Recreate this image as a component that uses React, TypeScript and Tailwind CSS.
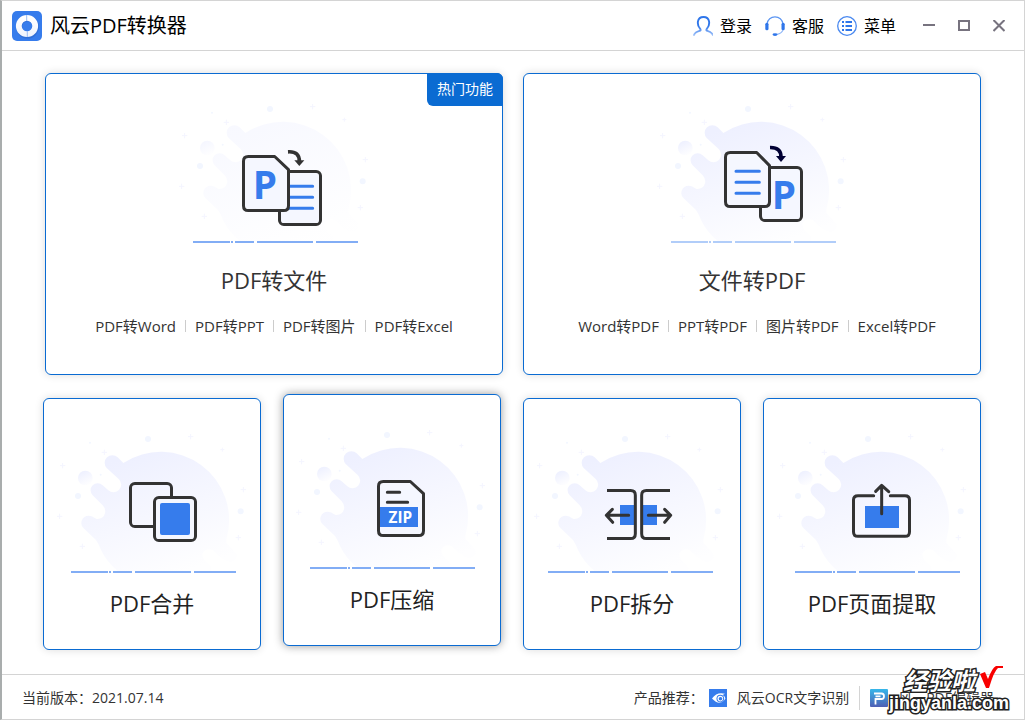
import type { ReactNode } from 'react';

const INK = '#333333';
const BLUE = '#367cec';
const PAPER = '#f5f7ff';

type SceneProps = {
  id: string;
  shift?: number;
  lineShift?: number;
  blobOpacity?: number;
  lineColor?: string;
  children: ReactNode;
};

/* Splash backdrop with a dashed ground line; the icon is drawn on top. */
function Scene({ id, shift = 0, lineShift = 0, blobOpacity = 1, lineColor = '#82adf5', children }: SceneProps) {
  return (
    <svg viewBox="60 135 576 438" width="192" height="146" className="shrink-0 overflow-visible" aria-hidden="true">
      <defs>
        <linearGradient id={`${id}-blob`} gradientUnits="userSpaceOnUse" x1="260" y1="220" x2="390" y2="580">
          <stop offset="0" stopColor="#eef0ff" />
          <stop offset="1" stopColor="#fefeff" />
        </linearGradient>
        <linearGradient id={`${id}-drop`} x1="0" y1="0" x2="0.5" y2="1">
          <stop offset="0" stopColor="#ebeeff" />
          <stop offset="1" stopColor="#fdfdff" />
        </linearGradient>
      </defs>
      <g transform={`translate(${shift} 0)`}>
        <path
          opacity={blobOpacity}
          fill={`url(#${id}-blob)`}
          d="M262 234 L245 217 A23 23 0 0 0 212 249 L248 282 A23 23 0 0 1 217 316 L200 301 A21 21 0 0 0 170 331 L200 361 Q210 372 207 385 Q202 403 182 402 Q167 392 158 392 A22 22 0 0 0 143 430 L180 465 Q190 480 195 495 Q213 532 245 558 L525 558 Q530 548 520 540 Q495 520 500 505 Q510 487 530 495 Q565 532 585 531 Q608 524 600 505 L572 475 Q570 468 572 460 A205 205 0 0 0 262 234 Z"
        />
        <circle cx="148" cy="279" r="22" fill={`url(#${id}-drop)`} opacity={blobOpacity < 1 ? 0.6 : 1} />
        <g fill="#f2f6ff">
          <circle cx="126" cy="333" r="9" />
          <circle cx="336" cy="162" r="9" />
          <circle cx="614" cy="379" r="9" />
          <circle cx="162" cy="173" r="3" />
          <circle cx="194" cy="269" r="3" />
        </g>
        <path
          stroke="#f4f5ff"
          strokeWidth="3"
          fill="none"
          d="M197 202h16m-8-8v16M72 242h16m-8-8v16M63 394h16m-8-8v16M131 484h16m-8-8v16M456 155h16m-8-8v16M553 194h12m-6-6v12M614 314h16m-8-8v16M599 458h16m-8-8v16"
        />
        <path
          transform={`translate(${lineShift} 0)`}
          stroke={lineColor}
          strokeWidth="6"
          fill="none"
          d="M105 561H216M219 561H225M231 561H288M297 561H465M474 561H600"
        />
      </g>
      {children}
    </svg>
  );
}

function PdfToFileArt() {
  return (
    <Scene id="to-file" blobOpacity={0.42}>
      <g transform="translate(36 33)" fill="none" stroke={INK} strokeWidth="9">
        <rect x="328.5" y="316.5" width="123" height="159" rx="13" fill={PAPER} />
        <path d="M350 361H428M350 394H428M350 427H428" stroke={BLUE} strokeLinecap="round" />
        <path fill={PAPER} strokeLinejoin="round" d="M314 271.5H235Q220.5 271.5 220.5 286V419Q220.5 433.5 235 433.5H341Q355.5 433.5 355.5 419V311Z" />
        <path d="M354 257.500C378 256 388 266 388 286" strokeWidth="11" />
        <path d="M373 283H403L388 300Z" fill={INK} stroke="none" />
        <text x="248" y="400" fill={BLUE} stroke="none" fontSize="116" className="font-['Open_Sans',sans-serif] font-bold">P</text>
      </g>
    </Scene>
  );
}

function FileToPdfArt() {
  return (
    <Scene id="to-pdf" lineColor="#b1cdf9">
      <g transform="translate(42 33)" fill="none" stroke={INK} strokeWidth="9">
        <rect x="331.5" y="304.5" width="123" height="159" rx="13" fill={PAPER} />
        <path fill={PAPER} strokeLinejoin="round" d="M320 259.500H241Q226.500 259.500 226.500 274V407Q226.500 421.500 241 421.500H344Q358.500 421.500 358.500 407V299Z" />
        <path d="M258 316H328M258 349H328M258 382H328" stroke={BLUE} strokeLinecap="round" />
        <path d="M360 244.500C383 244 393 254 393 273" stroke="#000033" strokeWidth="11" />
        <path d="M378 270H408L393 288Z" fill="#000033" stroke="none" />
        <text x="365" y="430" fill={BLUE} stroke="none" fontSize="116" className="font-['Open_Sans',sans-serif] font-bold">P</text>
      </g>
    </Scene>
  );
}

function MergeArt() {
  return (
    <Scene id="merge">
      <g fill="none" stroke={INK} strokeWidth="9">
        <rect x="283.5" y="295.5" width="123" height="129" rx="13" />
        <rect x="355.5" y="337.5" width="123" height="129" rx="13" fill={PAPER} />
        <rect x="372" y="354" width="90" height="96" rx="6" fill={BLUE} stroke="none" />
      </g>
    </Scene>
  );
}

function ZipArt() {
  return (
    <Scene id="zip" shift={-3}>
      <g transform="translate(0 12)" fill="none" stroke={INK} strokeWidth="9">
        <path fill={PAPER} strokeLinejoin="round" d="M403 289.500H322Q307.500 289.500 307.500 304V437Q307.500 451.500 322 451.500H428Q442.500 451.500 442.500 437V326Z" />
        <path strokeLinecap="round" d="M334 322H371M334 352H395" />
        <rect x="312" y="366" width="114" height="60" fill={BLUE} stroke="none" />
        <text x="373" y="414" textAnchor="middle" fill="#ffffff" stroke="none" fontSize="46" className="font-['Open_Sans',sans-serif] font-bold">ZIP</text>
      </g>
    </Scene>
  );
}

function SplitArt() {
  return (
    <Scene id="split" shift={-9}>
      <path fill={BLUE} d="M312 360h42v60h-42zM381 360h42v60h-42z" />
      <g fill="none" stroke={INK} strokeWidth="9">
        <path d="M273 316.5H344Q358 316.5 358 331V446Q358 460.5 344 460.5H273M462 316.5H391Q377 316.5 377 331V446Q377 460.5 391 460.5H462" />
        <path strokeLinecap="round" strokeLinejoin="round" d="M338 391H271M289 373L271 391L290 412M397 391H464M446 373L464 391L446 412" />
      </g>
    </Scene>
  );
}

function ExtractArt() {
  return (
    <Scene id="extract" lineShift={12}>
      <rect x="327" y="363" width="102" height="66" fill={BLUE} />
      <g fill="none" stroke={INK} strokeWidth="9" strokeLinecap="round" strokeLinejoin="round">
        <path d="M353 332H306Q292.500 332 292.500 345V440Q292.500 454 306 454H447Q460.500 454 460.500 440V345Q460.500 332 447 332H403" />
        <path d="M377 386V302M359 319L377 301L398 320" />
      </g>
    </Scene>
  );
}

function Logo() {
  return (
    <svg viewBox="0 0 30 30" width="30" height="30" aria-hidden="true">
      <defs>
        <linearGradient id="logo-ring" x1="0" y1="0" x2="0" y2="1">
          <stop offset="0" stopColor="#ffffff" />
          <stop offset="1" stopColor="#f1f5fd" />
        </linearGradient>
      </defs>
      <rect width="30" height="30" rx="5" fill={BLUE} />
      <circle cx="15.500" cy="16" r="8.500" fill="none" stroke="#2a62c4" strokeWidth="6" opacity="0.5" />
      <circle cx="15" cy="15" r="8.200" fill="none" stroke="url(#logo-ring)" strokeWidth="5.800" />
      <path d="M14.700 4V10M15.300 20V26" stroke="#8fb5f4" strokeWidth="0.900" />
    </svg>
  );
}

function UserIcon() {
  return (
    <svg viewBox="0 0 20 20" width="20" height="20" fill="none" strokeLinecap="round" aria-hidden="true">
      <defs>
        <linearGradient id="user-fade" gradientUnits="userSpaceOnUse" x1="0" y1="0" x2="0" y2="20">
          <stop offset="0.500" stopColor="#2f76ea" />
          <stop offset="1" stopColor="#a9c8fa" />
        </linearGradient>
      </defs>
      <path
        stroke="url(#user-fade)"
        strokeWidth="1.900"
        d="M1 19Q2 16 7.300 14.600Q8 13.800 7 12.600C3.800 9 3.600 1 10.500 1S17.200 9 14 12.600Q13 13.800 13.700 14.600Q18.500 16 20 19"
      />
    </svg>
  );
}

function HeadsetIcon() {
  return (
    <svg viewBox="0 0 20 20" width="20" height="20" fill="none" aria-hidden="true">
      <path d="M2 8C2.500 3.500 6 0.800 10 0.800S17.500 3.500 18 8" stroke="#5b95f2" strokeWidth="1.200" />
      <rect x="0.300" y="6.800" width="3.200" height="7.400" rx="1.500" fill="#2f76ea" />
      <rect x="16.500" y="6.800" width="3.200" height="7.400" rx="1.500" fill="#2f76ea" />
      <path d="M18 14Q16.500 17.600 12 18.400" stroke="#8db5f7" strokeWidth="1.100" />
      <ellipse cx="10" cy="18.600" rx="2.500" ry="1.300" fill="#2f76ea" />
    </svg>
  );
}

function ListIcon() {
  return (
    <svg viewBox="0 0 20 20" width="20" height="20" fill="none" aria-hidden="true">
      <circle cx="10" cy="10" r="9.300" stroke="#4a89f0" strokeWidth="1.300" />
      <path d="M5 6H7M5 10H7M5 14H7M8.500 6H15M8.500 10H15M8.500 14H15" stroke="#2f76ea" strokeWidth="2" />
    </svg>
  );
}

function EyeIcon() {
  return (
    <svg viewBox="0 0 18 18" width="18" height="18" aria-hidden="true">
      <rect width="18" height="18" fill={BLUE} />
      <path d="M3 9.500Q8 2.500 16 4.800L13.500 6Q16.300 7.400 16.400 9.400Q11 18 3 9.500Z" fill="#ffffff" />
      <circle cx="11.300" cy="9.600" r="3.800" fill={BLUE} />
      <circle cx="11.300" cy="9.600" r="2.800" fill="#ffffff" />
      <circle cx="11.500" cy="9.800" r="1.800" fill={BLUE} />
    </svg>
  );
}

function EditorIcon() {
  return (
    <svg viewBox="0 0 18 18" width="18" height="18" aria-hidden="true">
      <defs>
        <linearGradient id="editor-bg" x1="0" y1="0" x2="0" y2="1">
          <stop offset="0" stopColor="#35b7ea" />
          <stop offset="1" stopColor="#4f5fb4" />
        </linearGradient>
      </defs>
      <rect width="18" height="18" rx="1" fill="url(#editor-bg)" />
      <path d="M4 4.500H11.500Q14 4.500 14 7.200T11.500 10H5.500V15.500M5.500 7.300H10.500" fill="none" stroke="#ffffff" strokeWidth="1.800" />
    </svg>
  );
}

function Watermark() {
  return (
    <div className="pointer-events-none absolute right-[15px] bottom-1.5 flex flex-col items-end font-bold text-white [paint-order:stroke_fill]">
      <div className="flex items-start gap-1 pr-1.5">
        <span className="text-2xl leading-6 italic [-webkit-text-stroke:3px_#222222]">经验啦</span>
        <svg viewBox="0 0 24 24" width="24" height="24" className="-mt-1" aria-hidden="true">
          <path d="M1 9L6 7L9 14Q13 3 17 1H24V3H19Q15 6 10 23H7Z" fill="#f80000" />
        </svg>
      </div>
      <span className="font-['Liberation_Sans',sans-serif] text-lg leading-5 [-webkit-text-stroke:3px_#222222]">jingyanla.com</span>
    </div>
  );
}

const account = [
  { label: '登录', icon: <UserIcon /> },
  { label: '客服', icon: <HeadsetIcon /> },
  { label: '菜单', icon: <ListIcon /> },
];

const converters = [
  {
    title: 'PDF转文件',
    art: <PdfToFileArt />,
    hot: true,
    links: ['PDF转Word', 'PDF转PPT', 'PDF转图片', 'PDF转Excel'],
    inset: '',
  },
  {
    title: '文件转PDF',
    art: <FileToPdfArt />,
    hot: false,
    links: ['Word转PDF', 'PPT转PDF', '图片转PDF', 'Excel转PDF'],
    inset: 'pl-2.5',
  },
];

const tools = [
  { title: 'PDF合并', art: <MergeArt />, raised: false },
  { title: 'PDF压缩', art: <ZipArt />, raised: true },
  { title: 'PDF拆分', art: <SplitArt />, raised: false },
  { title: 'PDF页面提取', art: <ExtractArt />, raised: false },
];

export default function App() {
  return (
    <div className="relative flex min-h-screen flex-col border-y border-r border-l-2 border-[#d4d4d4] border-l-[#a9adad] bg-white font-['Open_Sans','Noto_Sans_CJK_SC',sans-serif] text-[#333333]">
      <header className="flex h-[50px] items-center border-b border-[#d4d4d4] pr-[19px] pl-[10px] text-black">
        <Logo />
        <h1 className="ml-2 text-xl leading-7">风云PDF转换器</h1>
        <nav className="ml-auto flex items-center gap-[13px]">
          {account.map((item) => (
            <button key={item.label} type="button" className="flex items-center gap-[7px] text-base leading-6">
              {item.icon}
              {item.label}
            </button>
          ))}
        </nav>
        <div className="ml-[27px] flex items-center gap-[23px] text-[#77737f]">
          <button type="button" aria-label="最小化">
            <svg viewBox="0 0 12 12" width="12" height="12" aria-hidden="true">
              <path d="M0 5H12" stroke="currentColor" strokeWidth="2" />
            </svg>
          </button>
          <button type="button" aria-label="最大化">
            <svg viewBox="0 0 12 12" width="12" height="12" aria-hidden="true">
              <rect x="1" y="1" width="10" height="9" fill="none" stroke="currentColor" strokeWidth="2" />
            </svg>
          </button>
          <button type="button" aria-label="关闭">
            <svg viewBox="0 0 12 12" width="12" height="12" aria-hidden="true">
              <path d="M0.500 0L11.500 11M11.500 0L0.500 11" stroke="currentColor" strokeWidth="2" />
            </svg>
          </button>
        </div>
      </header>

      <main className="flex grow flex-col gap-[23px] pt-[22px] pr-[43px] pb-6 pl-[41px]">
        <div className="grid grid-cols-2 gap-5 pl-0.5">
          {converters.map((card) => (
            <section key={card.title} className="relative flex flex-col items-center rounded-md border border-[#0a6bd2] bg-white pt-[26px] pb-9 shadow-[0_0_8px_rgba(0,0,0,0.14)]">
              {card.hot && (
                <span className="absolute -top-px -right-px rounded-tr-md rounded-bl-md bg-[#0a6bd2] px-2.5 pt-1.5 pb-[7px] text-sm leading-5 text-white">热门功能</span>
              )}
              {card.art}
              <h2 className="mt-[18px] text-[22px] leading-8">{card.title}</h2>
              <div className={card.inset}>
                <ul className="mt-[18px] flex items-center text-[15px] leading-6">
                  {card.links.map((link, i) => (
                    <li key={link} className="flex items-center">
                      {i > 0 && <span className="mx-[9px] h-3 w-px bg-[#cccccc]" />}
                      <a href="#">{link}</a>
                    </li>
                  ))}
                </ul>
              </div>
            </section>
          ))}
        </div>

        <div className="grid grid-cols-4 gap-[22px]">
          {tools.map((tool) => (
            <button
              key={tool.title}
              type="button"
              className={
                tool.raised
                  ? 'flex -translate-y-1 flex-col items-center rounded-md border border-[#0a6bd2] bg-white pt-[31px] pb-[30px] shadow-[0_0_10px_rgba(0,0,0,0.4)]'
                  : 'flex flex-col items-center rounded-md border border-[#0a6bd2] bg-white pt-[31px] pb-[30px] shadow-[0_0_8px_rgba(0,0,0,0.14)]'
              }
            >
              {tool.art}
              <span className="mt-[11px] text-[22px] leading-8 text-[#222222]">{tool.title}</span>
            </button>
          ))}
        </div>
      </main>

      <footer className="flex h-[45px] items-center border-t border-[#d4d4d4] pt-px pr-[30px] pl-5 text-sm leading-5">
        <p>当前版本：2021.07.14</p>
        <div className="ml-auto flex items-center">
          <span className="mr-[5px]">产品推荐：</span>
          <a href="#" className="flex items-center gap-2.5">
            <EyeIcon />
            风云OCR文字识别
          </a>
          <span className="mx-2.5 h-6 w-px bg-[#d4d4d4]" />
          <a href="#" className="flex items-center gap-2.5">
            <EditorIcon />
            风云PDF编辑器
          </a>
        </div>
      </footer>
      <Watermark />
    </div>
  );
}
